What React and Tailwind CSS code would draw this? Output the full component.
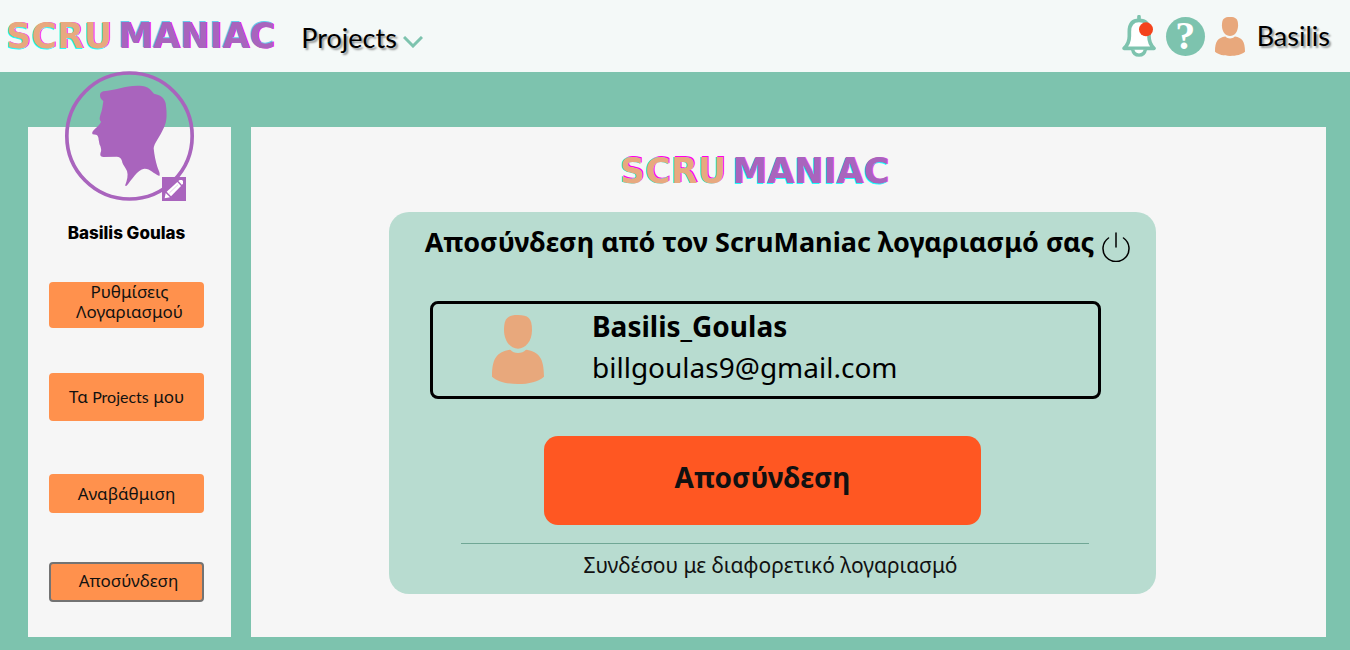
import React from "react";

function Logo({ className, scruClass, maniacClass }) {
  return (
    <div
      className={`flex gap-1.5 font-['DejaVu_Sans',sans-serif] text-[35px] leading-9 font-bold whitespace-nowrap ${className}`}
    >
      <span className={`text-[#e8a97f] ${scruClass}`}>SCRU</span>
      <span className={`text-[#a964bd] ${maniacClass}`}>MANIAC</span>
    </div>
  );
}

function PersonIcon({ className }) {
  return (
    <svg viewBox="336 345 156 207" preserveAspectRatio="none" className={className} fill="#e8a87c" aria-hidden="true">
      <path d="M414 345C444 345 456 354 456 390C456 424 436 446 414 446C392 446 372 424 372 390C372 354 384 345 414 345Z" />
      <path d="M389 449L392 450C400 462 428 462 437 450L440 449C476 456 492 472 492 530C476 545 446 552 414 552C382 552 352 545 336 530C336 472 352 456 389 449Z" />
    </svg>
  );
}

function BellIcon() {
  return (
    <svg viewBox="36 30 102 126" className="h-[42px] w-[34px]" fill="none" aria-hidden="true">
      <path
        d="M87 35V42M42 130C54 120 58 108 58 94V80C58 56 69 46 87 46C105 46 117 56 117 80V94C117 108 121 120 132 130Z"
        fill="#fff"
        stroke="#7dc3ae"
        strokeWidth="11"
        strokeLinejoin="round"
        strokeLinecap="round"
      />
      <path d="M68 134C72 156 102 156 106 134" fill="#fff" stroke="#7dc3ae" strokeWidth="10" />
      <circle cx="108" cy="73" r="21" fill="#f4431c" />
    </svg>
  );
}

function Silhouette() {
  return (
    <svg viewBox="45 18 387 390" className="h-[130px] w-[129px]" aria-hidden="true">
      <ellipse cx="238.500" cy="213" rx="188" ry="189" fill="none" stroke="#a964bd" strokeWidth="11" />
      <path
        fill="#a964bd"
        d="M150 90C150 84 155 80 160 79C195 75 225 63 262 62C285 62 292 66 300 73L312 86C335 90 345 103 347 115C352 150 350 170 343 185C330 215 312 235 311 250C313 270 317 290 322 305C325 315 332 325 328 333C310 325 300 310 283 311C262 314 245 345 230 362L225 362C232 345 235 330 231 318C225 305 217 298 216 288C213 278 208 275 200 275L160 276C150 275 150 270 152 262C155 258 153 250 151 243C147 238 148 230 146 225C146 216 143 210 138 209L128 208C126 204 126 202 129 198C138 187 150 180 153 170C147 165 149 158 151 150C157 135 158 120 160 108C155 105 149 98 150 90Z"
      />
    </svg>
  );
}

function PencilIcon() {
  return (
    <svg viewBox="0 0 72 72" className="size-6" aria-hidden="true">
      <path d="M8 64L11 48L24 61Z" fill="#fff" />
      <path d="M14 44L46 15L57 27L27 58Z" fill="#fff" />
      <path d="M49 12L53 9H60L63 12V19L60 24Z" fill="#fff" />
      <path d="M22 48L48 23" stroke="#a964bd" strokeWidth="1" />
    </svg>
  );
}

function PowerIcon() {
  return (
    <svg viewBox="0 0 28 30" className="h-[30px] w-7" fill="none" stroke="#000" strokeWidth="1.500" strokeLinecap="round" aria-hidden="true">
      <path d="M6.500 6A13 13 0 1 0 21.500 6" />
      <path d="M14 1V15" />
    </svg>
  );
}

function NavButton({ className, children }) {
  return (
    <button
      type="button"
      className={`w-full rounded-[4px] bg-[#ff914d] text-center text-[17px] leading-5 text-[#111] ${className}`}
    >
      {children}
    </button>
  );
}

export default function App() {
  return (
    <div className="flex min-h-screen flex-col bg-[#7dc3ae] font-['Noto_Sans',sans-serif] text-black">
      <header className="flex h-[72px] items-center justify-between bg-[#f4f9f8] pr-5 pl-1.5 font-[Lato,sans-serif] text-[27px]">
        <div className="flex items-center gap-[26px]">
          <Logo
            className=""
            scruClass="[text-shadow:-1px_1px_0_#22ffff,1px_0_0_#ff22ee]"
            maniacClass="[text-shadow:-1px_-1px_0_#66ccee,1px_0_0_#ff22ee]"
          />
          <button type="button" className="flex items-center gap-1.5 pt-1 [text-shadow:2px_2px_2px_rgba(0,0,0,0.4)]">
            Projects
            <svg viewBox="0 0 20 12" className="mt-2 h-3 w-5" fill="none" aria-hidden="true">
              <path d="M1 1L10 10L19 1" stroke="#7dc3ae" strokeWidth="3" />
            </svg>
          </button>
        </div>
        <div className="flex items-center gap-2.5">
          <button type="button" aria-label="Notifications">
            <BellIcon />
          </button>
          <button
            type="button"
            aria-label="Help"
            className="flex size-[39px] items-center justify-center rounded-full bg-[#7dc3ae] font-['Liberation_Serif',serif] text-[40px] leading-9 font-bold text-white"
          >
            ?
          </button>
          <button type="button" className="flex items-center gap-3 [text-shadow:2px_2px_2px_rgba(0,0,0,0.4)]">
            <PersonIcon className="h-[39px] w-[30px]" />
            Basilis
          </button>
        </div>
      </header>

      <div className="flex flex-1 gap-5 pt-[55px] pr-6 pb-[13px] pl-7">
        <aside className="flex w-[203px] shrink-0 flex-col items-center bg-[#f6f6f6]">
          <div className="relative -mt-14">
            <Silhouette />
            <button type="button" aria-label="Edit picture" className="absolute right-2 bottom-0 bg-[#a964bd]">
              <PencilIcon />
            </button>
          </div>
          <p className="mt-5 pr-1.5 font-[Inter,sans-serif] text-[17px] leading-6 font-extrabold">Basilis Goulas</p>
          <nav className="mt-[37px] flex w-[161px] flex-col pr-1.5">
            <NavButton className="h-[46px] pr-3 pb-1.5 pl-[18px]">Ρυθμίσεις Λογαριασμού</NavButton>
            <NavButton className="mt-[45px] h-12">
              Τα <span className="font-[Lato,sans-serif] text-base">Projects</span> μου
            </NavButton>
            <NavButton className="mt-[53px] h-[39px]">Αναβάθμιση</NavButton>
            <NavButton className="mt-[49px] h-10 border-2 border-[#737373] pb-0.5 pl-1">Αποσύνδεση</NavButton>
          </nav>
        </aside>

        <main className="flex flex-1 flex-col items-center bg-[#f6f6f6] pt-[26px] pr-8 pb-[42px]">
          <Logo
            className="pr-9"
            scruClass="[text-shadow:-1px_0_0_#22ffff,1px_-1px_0_#ff00ee]"
            maniacClass="[text-shadow:-1px_1px_0_#22ffff,1px_0_0_#ff55ee]"
          />
          <section className="mt-[23px] flex w-full max-w-[767px] flex-col items-center rounded-[20px] bg-[#b8dcd0] px-6 pt-3 pb-3.5">
            <h1 className="flex h-9 items-start gap-2 pl-2.5 text-[27px] leading-9 font-bold whitespace-nowrap">
              Αποσύνδεση από τον ScruManiac λογαριασμό σας
              <button type="button" aria-label="Power" className="mt-2">
                <PowerIcon />
              </button>
            </h1>
            <div className="mt-[41px] mr-3.5 flex w-full max-w-[671px] items-center gap-12 rounded-lg border-3 border-black pt-0.5 pb-2 pl-[59px]">
              <PersonIcon className="mt-1 h-[69px] w-[52px]" />
              <div className="text-[28px] leading-[41px]">
                <p className="font-bold">Basilis_Goulas</p>
                <p>billgoulas9@gmail.com</p>
              </div>
            </div>
            <button
              type="button"
              className="mt-[37px] mr-5 h-[89px] w-full max-w-[437px] rounded-[14px] bg-[#ff5722] pb-2 text-[28px] font-bold text-[#111]"
            >
              Αποσύνδεση
            </button>
            <hr className="mt-[18px] ml-1 w-full max-w-[628px] border-[#70a795]" />
            <a href="#login" className="mt-1.5 pr-1 text-[21px] leading-[30px] text-[#111]">
              Συνδέσου με διαφορετικό λογαριασμό
            </a>
          </section>
        </main>
      </div>
    </div>
  );
}
